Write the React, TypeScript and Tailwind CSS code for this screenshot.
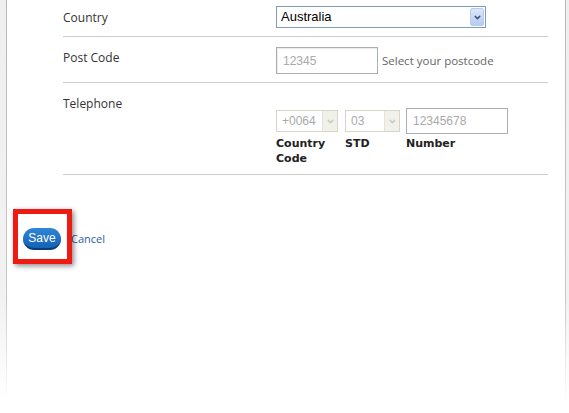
import { ChevronDown } from "lucide-react";

const ui = "font-['Open_Sans',sans-serif]";
const arial = "font-['Liberation_Sans',Arial,sans-serif]";

function Arrow({ disabled }: { disabled?: boolean }) {
  return (
    <span
      className={
        disabled
          ? "flex h-full w-[15px] items-center justify-center border-l border-[#e4e2da] bg-[#f1f1ec]"
          : "flex h-[18px] w-[14px] items-center justify-center rounded-[2px] border border-[#b9cbee] bg-gradient-to-b from-[#dce6fb] to-[#b7cbf1]"
      }
    >
      <ChevronDown
        size={9}
        strokeWidth={4}
        className={disabled ? "text-[#c9c9c4]" : "text-[#3f557f]"}
      />
    </span>
  );
}

export default function App() {
  return (
    <div className={`flex h-[413px] w-[569px] overflow-hidden bg-white ${ui}`}>
      {/* left gutter */}
      <div className="w-[6px] bg-gradient-to-b from-[#efefef] via-[#f2f2f2] via-72% to-white to-97%" />
      <div className="w-px bg-gradient-to-b from-[#b8b8b8] via-[#c8c8c8] via-72% to-white to-97%" />

      <main className="flex-1">
        <div className="pl-[56px] pr-[17px]">
          {/* Country */}
          <div className="flex h-[37px] border-b border-[#cdcdcd]">
            <div className="w-[213px] pt-[10px] text-[12px] leading-[16px] text-[#333]">Country</div>
            <div className="pt-[6px]">
              <div className={`flex h-[22px] w-[210px] items-center justify-between border border-[#7f9db9] pl-[4px] pr-[1px] text-[13px] text-black ${arial}`}>
                <span>Australia</span>
                <Arrow />
              </div>
            </div>
          </div>

          {/* Post code */}
          <div className="flex h-[46px] border-b border-[#cdcdcd]">
            <div className="w-[213px] pt-[13px] text-[12px] leading-[16px] text-[#333]">Post Code</div>
            <div className="flex items-center gap-[4px] pt-[10px] self-start">
              <div className={`flex h-[27px] w-[102px] items-center border border-[#abadb3] pl-[6px] text-[12px] text-[#a9a9a9] shadow-[inset_1px_1px_1px_rgba(0,0,0,0.08)] ${arial}`}>
                12345
              </div>
              <span className="text-[11.5px] text-[#666]">Select your postcode</span>
            </div>
          </div>

          {/* Telephone */}
          <div className="flex h-[92px] border-b border-[#cdcdcd]">
            <div className="w-[213px] pt-[13px] text-[12px] leading-[16px] text-[#333]">Telephone</div>
            <div className="flex pt-[25px] font-['DejaVu_Sans',Verdana,sans-serif] text-[11px] font-bold leading-[15px] text-[#222]">
              <div className="mr-[7px] w-[62px]">
                <div className="flex h-[26px] items-center">
                  <div className={`flex h-[22px] w-[62px] items-center justify-between border border-[#d8d5c8] pl-[5px] text-[12px] font-normal text-[#aaa] ${arial}`}>
                    <span>+0064</span>
                    <Arrow disabled />
                  </div>
                </div>
                <div className="mt-[2px]">Country Code</div>
              </div>
              <div className="mr-[6px] w-[55px]">
                <div className="flex h-[26px] items-center">
                  <div className={`flex h-[22px] w-[55px] items-center justify-between border border-[#d8d5c8] pl-[5px] text-[12px] font-normal text-[#aaa] ${arial}`}>
                    <span>03</span>
                    <Arrow disabled />
                  </div>
                </div>
                <div className="mt-[2px]">STD</div>
              </div>
              <div className="w-[102px]">
                <div className={`flex h-[26px] w-[102px] items-center border border-[#abadb3] pl-[6px] text-[12px] font-normal text-[#a9a9a9] ${arial}`}>
                  12345678
                </div>
                <div className="mt-[2px]">Number</div>
              </div>
            </div>
          </div>
        </div>

        {/* actions */}
        <div className="mt-[53px] flex items-center gap-[10px] pl-[16px]">
          <div className="relative">
            <div className="absolute -bottom-[14px] -left-[10px] -right-[11px] -top-[19px] border-[5px] border-[#ef1a12] shadow-[2px_2px_5px_rgba(0,0,0,0.45)]" />
            <button
              className={`relative flex h-[22px] w-[38px] items-center justify-center rounded-full border-b-2 border-[#093c78] bg-gradient-to-b from-[#2f86d6] to-[#1262b6] text-[12px] text-white ${arial}`}
            >
              Save
            </button>
          </div>
          <a className="text-[11px] text-[#2b5fae]">Cancel</a>
        </div>
      </main>

      {/* right gutter */}
      <div className="w-px bg-gradient-to-b from-[#b8b8b8] via-[#c8c8c8] via-72% to-white to-97%" />
      <div className="w-[3px] bg-gradient-to-b from-[#efefef] via-[#f2f2f2] via-72% to-white to-97%" />
    </div>
  );
}
